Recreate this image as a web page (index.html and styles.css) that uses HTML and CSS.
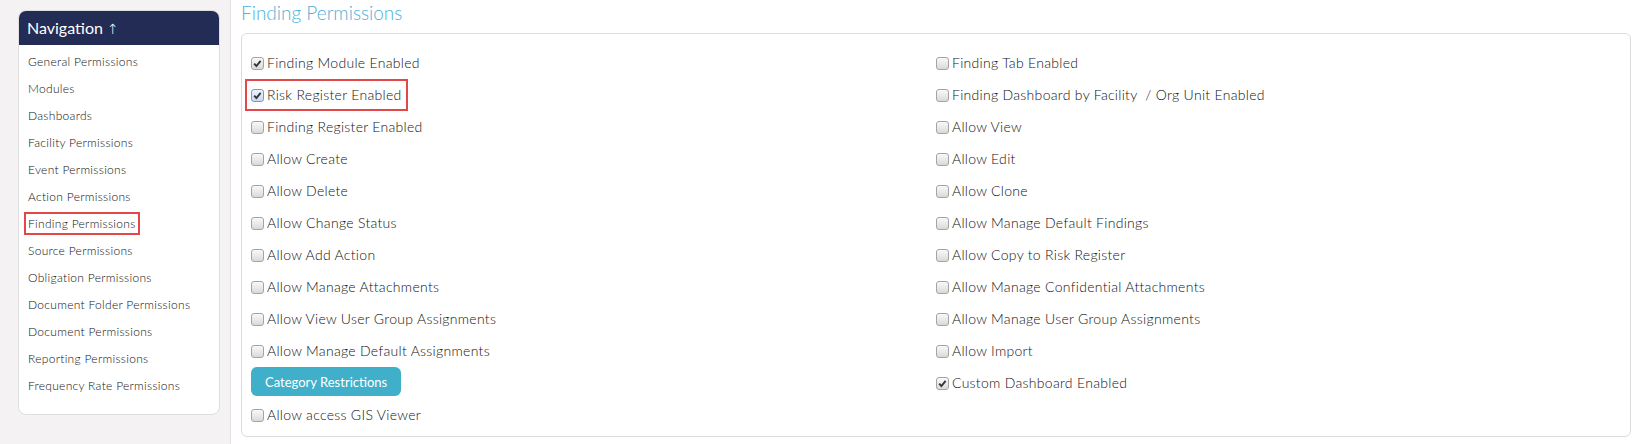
FILE: index.html
```html
<!DOCTYPE html>
<html lang="en">

<head>
    <meta charset="UTF-8">
    <meta name="viewport" content="width=device-width, initial-scale=1.0">
    <title>Finding Permissions</title>
    <link rel="stylesheet" href="styles.css">
</head>

<body>
    <div class="layout">
        <aside class="sidebar">
            <div class="nav-card">
                <div class="nav-head">Navigation <span class="arrow">&uarr;</span></div>
                <ul class="nav-list">
                    <li><a href="#">General Permissions</a></li>
                    <li><a href="#">Modules</a></li>
                    <li><a href="#">Dashboards</a></li>
                    <li><a href="#">Facility Permissions</a></li>
                    <li><a href="#">Event Permissions</a></li>
                    <li><a href="#">Action Permissions</a></li>
                    <li><a href="#" class="marked">Finding Permissions</a></li>
                    <li><a href="#">Source Permissions</a></li>
                    <li><a href="#">Obligation Permissions</a></li>
                    <li><a href="#">Document Folder Permissions</a></li>
                    <li><a href="#">Document Permissions</a></li>
                    <li><a href="#">Reporting Permissions</a></li>
                    <li><a href="#">Frequency Rate Permissions</a></li>
                </ul>
            </div>
        </aside>

        <main class="content">
            <h1 class="page-title">Finding Permissions</h1>
            <div class="perm-panel">
                <div class="perm-col">
                    <div class="perm-row"><label class="perm"><span class="cb on"><svg viewBox="0 0 13 13"><path d="M2.6 6.6 L5.2 9.6 L10.2 3.4" /></svg></span>Finding Module Enabled</label></div>
                    <div class="perm-row"><label class="perm marked"><span class="cb on focus"><svg viewBox="0 0 13 13"><path d="M2.6 6.6 L5.2 9.6 L10.2 3.4" /></svg></span>Risk Register Enabled</label></div>
                    <div class="perm-row"><label class="perm"><span class="cb"></span>Finding Register Enabled</label></div>
                    <div class="perm-row"><label class="perm"><span class="cb"></span>Allow Create</label></div>
                    <div class="perm-row"><label class="perm"><span class="cb"></span>Allow Delete</label></div>
                    <div class="perm-row"><label class="perm"><span class="cb"></span>Allow Change Status</label></div>
                    <div class="perm-row"><label class="perm"><span class="cb"></span>Allow Add Action</label></div>
                    <div class="perm-row"><label class="perm"><span class="cb"></span>Allow Manage Attachments</label></div>
                    <div class="perm-row"><label class="perm"><span class="cb"></span>Allow View User Group Assignments</label></div>
                    <div class="perm-row"><label class="perm"><span class="cb"></span>Allow Manage Default Assignments</label></div>
                    <div class="perm-row btn-row"><button class="btn">Category Restrictions</button></div>
                    <div class="perm-row"><label class="perm"><span class="cb"></span>Allow access GIS Viewer</label></div>
                </div>
                <div class="perm-col">
                    <div class="perm-row"><label class="perm"><span class="cb"></span>Finding Tab Enabled</label></div>
                    <div class="perm-row"><label class="perm"><span class="cb"></span>Finding Dashboard by Facility &nbsp;/ Org Unit Enabled</label></div>
                    <div class="perm-row"><label class="perm"><span class="cb"></span>Allow View</label></div>
                    <div class="perm-row"><label class="perm"><span class="cb"></span>Allow Edit</label></div>
                    <div class="perm-row"><label class="perm"><span class="cb"></span>Allow Clone</label></div>
                    <div class="perm-row"><label class="perm"><span class="cb"></span>Allow Manage Default Findings</label></div>
                    <div class="perm-row"><label class="perm"><span class="cb"></span>Allow Copy to Risk Register</label></div>
                    <div class="perm-row"><label class="perm"><span class="cb"></span>Allow Manage Confidential Attachments</label></div>
                    <div class="perm-row"><label class="perm"><span class="cb"></span>Allow Manage User Group Assignments</label></div>
                    <div class="perm-row"><label class="perm"><span class="cb"></span>Allow Import</label></div>
                    <div class="perm-row"><label class="perm"><span class="cb on"><svg viewBox="0 0 13 13"><path d="M2.6 6.6 L5.2 9.6 L10.2 3.4" /></svg></span>Custom Dashboard Enabled</label></div>
                </div>
            </div>
        </main>
    </div>
</body>

</html>
```

FILE: styles.css
```css
* {
    margin: 0;
    padding: 0;
    box-sizing: border-box;
}

body {
    font-family: 'Lato', 'Open Sans', sans-serif;
    font-weight: 300;
    color: #111;
    background: #fff;
}

.layout {
    display: flex;
    height: 100vh;
}

/* left column */
.sidebar {
    width: 231px;
    flex-shrink: 0;
    background: #f4f2f2;
    border-right: 1px solid #e2e0e0;
    padding: 10px 10px 0 18px;
}

.nav-card {
    width: 202px;
    background: #fff;
    border: 1px solid #dedede;
    border-radius: 8px;
    overflow: hidden;
}

.nav-head {
    height: 35px;
    margin: -1px -1px 0;
    padding: 0 9px;
    background: #222c55;
    color: #fff;
    font-size: 16px;
    font-weight: normal;
    line-height: 36px;
}

.nav-head .arrow {
    font-family: 'DejaVu Sans', sans-serif;
    font-weight: 300;
    font-size: 14px;
}

.nav-list {
    list-style: none;
    padding: 3px 0 15px 9px;
}

.nav-list li {
    height: 27px;
    line-height: 27px;
    font-size: 12px;
    letter-spacing: 0.3px;
}

.nav-list a {
    color: #111;
    text-decoration: none;
}

.nav-list a.marked {
    outline: 2px solid #e2474a;
    outline-offset: 2px;
}

/* main area */
.content {
    flex: 1;
    padding: 0 6px 0 10px;
}

.page-title {
    font-size: 19px;
    font-weight: 300;
    color: #4fb0d8;
    line-height: 26px;
    margin-bottom: 7px;
}

.perm-panel {
    display: grid;
    grid-template-columns: 1fr 1fr;
    height: 404px;
    padding: 13px 9px 0;
    border: 1px solid #dcdcdc;
    border-radius: 6px;
}

.perm-row {
    height: 32px;
    display: flex;
    align-items: center;
}

.perm {
    display: inline-flex;
    align-items: center;
    font-size: 14px;
    letter-spacing: 0.3px;
    line-height: 20px;
}

.perm.marked {
    outline: 2px solid #e2474a;
    outline-offset: 4px;
}

.cb {
    width: 13px;
    height: 13px;
    margin-right: 3px;
    border: 1px solid #a4a4a4;
    border-radius: 3px;
    background: linear-gradient(#fafafa, #d9d9d9);
    display: inline-block;
}

.cb svg {
    display: block;
    width: 11px;
    height: 11px;
}

.cb svg path {
    fill: none;
    stroke: #333;
    stroke-width: 2.2;
}

.cb.focus {
    border-color: #6f9bd6;
    background: linear-gradient(#eef4fc, #c9daf1);
}

.btn-row {
    align-items: flex-start;
}

.btn {
    height: 29px;
    padding: 0 14px;
    border: none;
    border-radius: 6px;
    background: #40afca;
    color: #fff;
    font-family: inherit;
    font-weight: normal;
    font-size: 13px;
}
```
